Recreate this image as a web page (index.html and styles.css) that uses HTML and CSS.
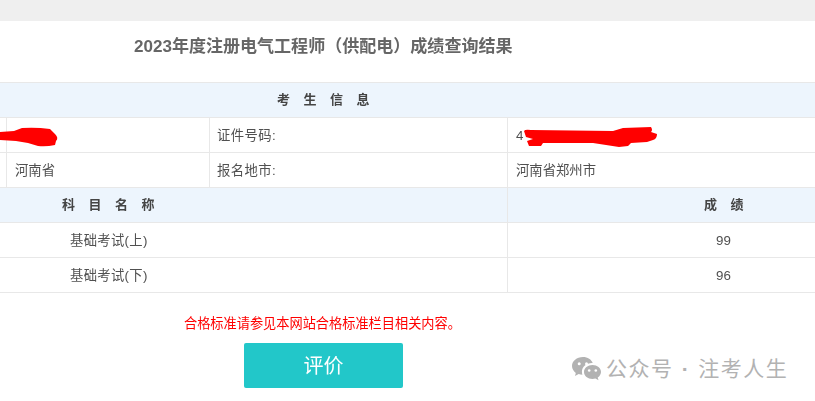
FILE: index.html
```html
<!DOCTYPE html>
<html lang="zh">
<head>
<meta charset="utf-8">
<title>成绩查询结果</title>
<link rel="stylesheet" href="styles.css">
</head>
<body>
<div class="page">
  <div class="topbar"></div>
  <h1 class="title">2023年度注册电气工程师（供配电）成绩查询结果</h1>
  <div class="result">
    <div class="row head"><span class="spaced info-title">考生信息</span></div>
    <div class="row four">
      <div class="cell"></div><div class="cell"></div>
      <div class="cell label">证件号码:</div><div class="cell"><span class="id">4</span></div>
    </div>
    <div class="row four">
      <div class="cell"></div><div class="cell">河南省</div>
      <div class="cell label">报名地市:</div><div class="cell">河南省郑州市</div>
    </div>
    <div class="row two head">
      <div class="cell name-head"><span class="spaced">科目名称</span></div>
      <div class="cell grade-head"><span class="spaced">成绩</span></div>
    </div>
    <div class="row two">
      <div class="cell name">基础考试(上)</div><div class="cell score">99</div>
    </div>
    <div class="row two">
      <div class="cell name">基础考试(下)</div><div class="cell score">96</div>
    </div>
  </div>
  <p class="notice">合格标准请参见本网站合格标准栏目相关内容。</p>
  <div class="actions"><a class="btn">评价</a></div>
</div>

<svg class="scribble s1" width="60" height="30" viewBox="0 0 60 30"><path fill="#f00" d="M0 7 L14 6 L22 3 Q36 2 50 4 L55 9 Q59 13 56 16 L55 20 Q46 22 38 21 L28 18 L16 16 L0 15Z"/></svg>
<svg class="scribble s2" width="140" height="24" viewBox="0 0 140 24"><path fill="#f00" d="M1 6 Q2 4 8 5 L90 6 L100 3 L128 2 Q130 5 128 7 L134 9 Q134 14 130 15 L124 17 L108 18 L105 21 L96 22 L70 18 L20 18 L18 21 L6 21 L4 16 L10 14 L3 12Z"/></svg>

<div class="watermark">
  <svg width="32" height="26" viewBox="0 0 32 26">
    <path fill="#b2b2b2" d="M12 1C5.700 1 1 5 1 10c0 2.800 1.500 5.200 3.800 6.900L4 20l3.700-1.900c1.200.4 2.500.6 3.700.6-.3-1-.5-1.900-.5-2.900 0-5 4.700-8.700 10-8.700h.8C20.500 3.500 16.600 1 12 1z"/>
    <path fill="#b2b2b2" d="M21.500 9C16.800 9 13 12.100 13 16s3.800 7 8.500 7c1 0 2-.2 2.900-.5l3.100 1.800-.8-2.800c2-1.300 3.300-3.300 3.300-5.500 0-3.900-3.800-7-8.500-7z"/>
    <circle fill="#fff" cx="8.200" cy="7.800" r="1.500"/><circle fill="#fff" cx="15.500" cy="7.800" r="1.500"/>
    <circle fill="#fff" cx="18.200" cy="14.500" r="1.300"/><circle fill="#fff" cx="24.800" cy="14.500" r="1.300"/>
  </svg>
  <span class="wm-text">公众号<span class="wm-dot">·</span>注考人生</span>
</div>
</body>
</html>
```
FILE: styles.css
```css
html, body {
  margin: 0;
  height: 100%;
  overflow: hidden;
  background: #fff;
}
body {
  position: relative;
  font-family: "Liberation Sans", "Noto Sans CJK SC", sans-serif;
  font-size: 13.33px;
  color: #505050;
}
.page {
  display: flex;
  flex-direction: column;
  filter: blur(0.3px);
}
.topbar {
  height: 21px;
  background: #efefef;
}
.title {
  margin: 0;
  height: 61px;
  box-sizing: border-box;
  padding: 14px 0 0 134px;
  font-size: 17.05px;
  line-height: 24px;
  font-weight: 700;
  color: #666;
}
.result {
  border-bottom: 1px solid #e8e8e8;
}
.row {
  height: 35px;
  box-sizing: border-box;
  border-top: 1px solid #e8e8e8;
  display: grid;
  align-items: stretch;
  line-height: 34px;
}
.four { grid-template-columns: 6px 203px 298px 1fr; }
.two { grid-template-columns: 507px 1fr; }
.head { background: #edf5fd; }
.cell {
  box-sizing: border-box;
  padding: 1px 0 0 8px;
  border-left: 1px solid #e8e8e8;
  white-space: nowrap;
}
.cell:first-child { border-left: 0; padding-left: 0; }
.cell.label { padding-left: 7px; letter-spacing: 0.4px; }
.head .cell { padding-top: 0; }
.spaced {
  font-weight: 700;
  font-size: 13px;
  letter-spacing: 13.5px;
  color: #444;
}
.info-title { padding-left: 277px; }
.two .name-head:first-child { padding-left: 62px; }
.two .name:first-child { padding-left: 70px; letter-spacing: 0.3px; }
.score { padding-left: 208px; }
.grade-head { padding-left: 196px; }
.notice {
  margin: 0;
  padding: 22px 0 0 184px;
  font-size: 13.2px;
  line-height: 18px;
  color: #f00;
}
.actions {
  padding: 10px 0 0 244px;
}
.btn {
  display: block;
  width: 159px;
  height: 45px;
  border-radius: 2px;
  background: #22c7c9;
  color: #fff;
  font-size: 20px;
  line-height: 46px;
  text-align: center;
}
.scribble { position: absolute; }
.s1 { left: 0; top: 125px; }
.s2 { left: 523px; top: 125px; }
.watermark {
  position: absolute;
  left: 571px;
  top: 355px;
  display: flex;
  align-items: center;
  gap: 3px;
  line-height: 28px;
  color: #b2b2b2;
  white-space: nowrap;
}
.wm-text {
  font-size: 21px;
  letter-spacing: 1.45px;
}
.wm-dot {
  display: inline-block;
  width: 25px;
  text-align: center;
  font-weight: 700;
}
```
